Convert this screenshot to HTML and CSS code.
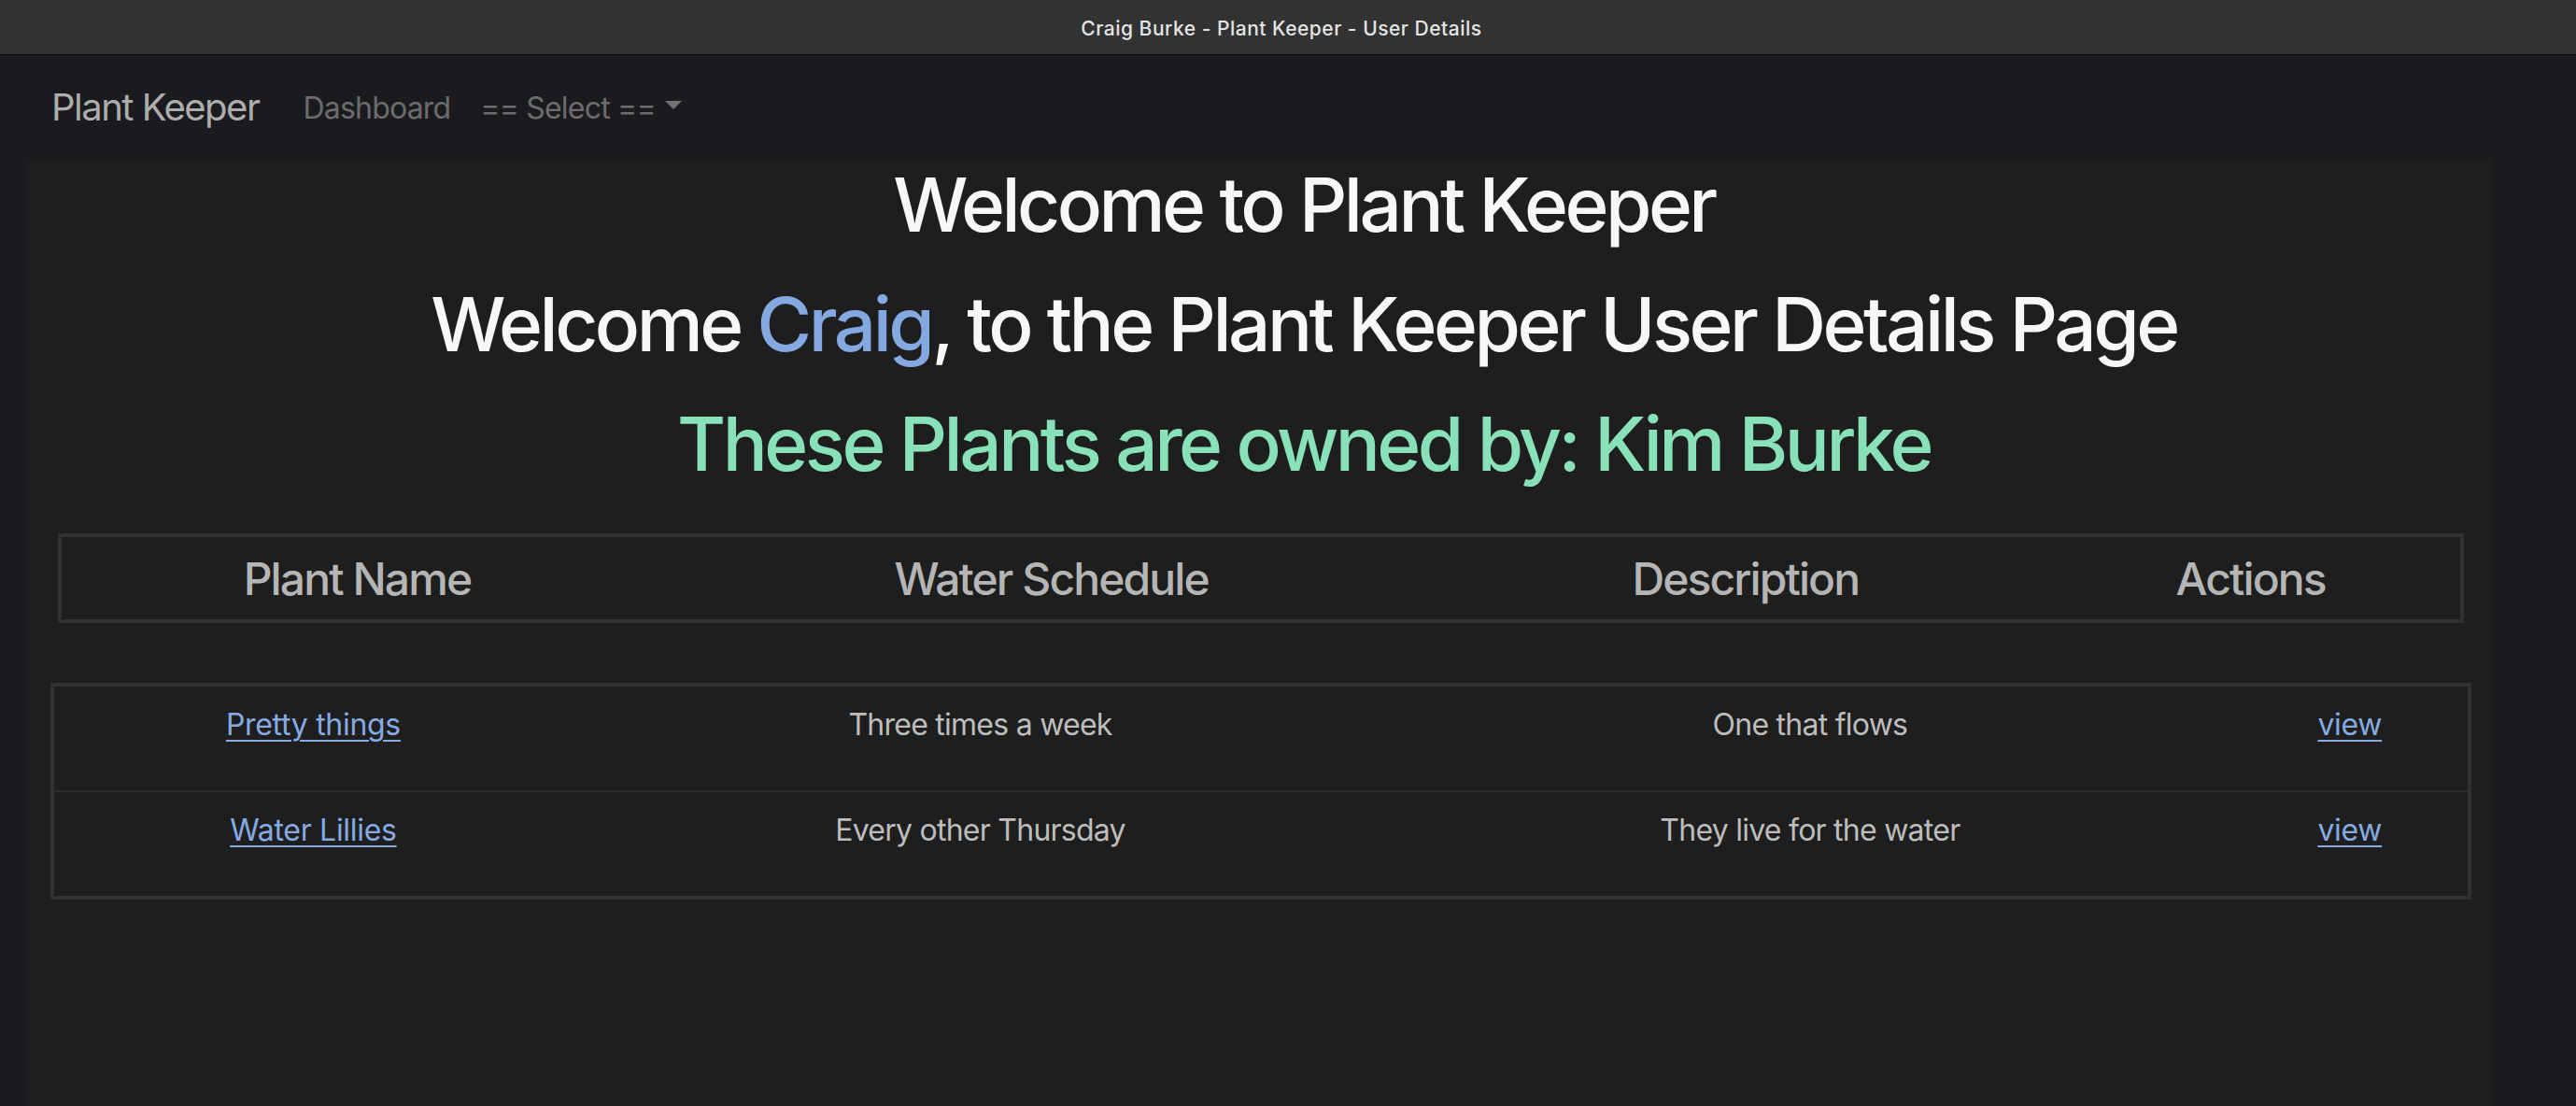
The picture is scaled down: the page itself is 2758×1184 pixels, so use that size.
FILE: index.html
```html
<!DOCTYPE html>
<html lang="en">
<head>
<meta charset="utf-8">
<title>Craig Burke - Plant Keeper - User Details</title>
<link rel="stylesheet" href="styles.css">
</head>
<body>
<div class="titlebar">Craig Burke - Plant Keeper - User Details</div>
<nav class="navbar">
  <a class="brand" href="#">Plant Keeper</a>
  <a class="nav-link" href="#">Dashboard</a>
  <span class="nav-link dropdown">== Select ==<span class="caret"></span></span>
</nav>
<main class="container">
  <div class="headings">
    <h1 class="title">Welcome to Plant Keeper</h1>
    <h1 class="title">Welcome <span class="name">Craig</span>, to the Plant Keeper User Details Page</h1>
    <h1 class="title owner">These Plants are owned by: Kim Burke</h1>
  </div>

  <table class="head-table">
    <colgroup>
      <col class="h1c"><col class="h2c"><col class="h3c"><col class="h4c">
    </colgroup>
    <thead>
      <tr><th>Plant Name</th><th>Water Schedule</th><th>Description</th><th>Actions</th></tr>
    </thead>
  </table>

  <table class="plants">
    <colgroup>
      <col class="b1c"><col class="b2c"><col class="b3c"><col class="b4c">
    </colgroup>
    <tbody>
      <tr>
        <td><a href="#">Pretty things</a></td>
        <td>Three times a week</td>
        <td>One that flows</td>
        <td><a href="#">view</a></td>
      </tr>
      <tr>
        <td><a href="#">Water Lillies</a></td>
        <td>Every other Thursday</td>
        <td>They live for the water</td>
        <td><a href="#">view</a></td>
      </tr>
    </tbody>
  </table>
</main>
</body>
</html>
```
FILE: styles.css
```css
* { box-sizing: border-box; }
html, body { margin: 0; padding: 0; }
body {
  background: #1b1b1f;
  font-family: Inter, "Noto Sans", sans-serif;
  height: 100vh;
  display: flex;
  flex-direction: column;
  overflow: hidden;
}
.titlebar {
  height: 59px;
  flex: none;
  background: #323232;
  border-bottom: 1px solid #0c0c0c;
  color: #e4e4e4;
  font-size: 21px;
  font-weight: 500;
  text-align: center;
  line-height: 57px;
  padding: 2px 14px 0 0;
  letter-spacing: 0.5px;
}
.navbar {
  height: 111px;
  flex: none;
  display: flex;
  align-items: center;
  padding: 0 0 0 55px;
}
.navbar a { text-decoration: none; }
.brand {
  font-size: 40px;
  color: #adadad;
  margin-right: 31px;
  letter-spacing: -1.5px;
}
.nav-link {
  font-size: 32px;
  color: #6c6c6c;
  padding: 0 16px;
  letter-spacing: -0.8px;
  margin-top: 1px;
}
.dropdown { display: inline-flex; align-items: center; }
.caret {
  display: inline-block;
  margin-left: 10px;
  width: 0; height: 0;
  border-top: 9px solid #727272;
  border-left: 9px solid transparent;
  border-right: 9px solid transparent;
  margin-top: -6px;
}
.container {
  flex: 1;
  margin-left: 30px;
  width: 2639px;
  background: #1e1e1e;
  padding: 1px 23px 0 24px;
}
.headings { padding-left: 92px; }
.title {
  margin: 0 0 32px;
  font-size: 80px;
  font-weight: 500;
  line-height: 96px;
  text-align: center;
  color: #f7f7f7;
  letter-spacing: -3.5px;
}
.name { color: #84a9e1; }
.owner { color: #88e1b9; margin-bottom: 48px; }

table { border-collapse: collapse; table-layout: fixed; }
.head-table {
  width: 2576px;
  margin-left: 8px;
  border: 4px solid #313131;
}
.head-table th {
  font-size: 48px;
  font-weight: 500;
  color: #b5b5b5;
  line-height: 58px;
  padding: 16px 8px 14px;
  text-align: center;
  letter-spacing: -1.9px;
}
.h1c { width: 634px; }
.h2c { width: 852px; }
.h3c { width: 632px; }
.h4c { width: 450px; }

.plants {
  width: 2592px;
  margin-top: 64px;
  border: 4px solid #313131;
}
.plants td {
  font-size: 32px;
  line-height: 48px;
  color: #bdbdbd;
  text-align: center;
  padding: 17px 8px 46px;
  letter-spacing: -0.75px;
}
.plants tr + tr td { border-top: 2px solid #2b2b2b; }
.plants a {
  color: #86abe3;
  text-decoration: underline;
  text-underline-offset: 5px;
  text-decoration-thickness: 2px;
}
.plants td:first-child a, .plants td:last-child a { letter-spacing: -0.3px; }
.b1c { width: 556px; }
.b2c { width: 872px; }
.b3c { width: 902px; }
.b4c { width: 254px; }
```
